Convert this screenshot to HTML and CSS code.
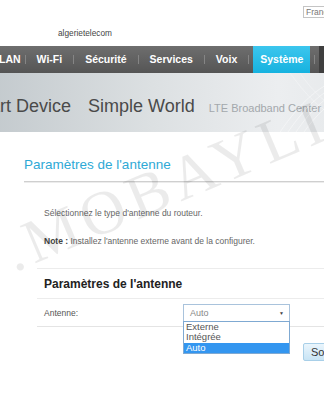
FILE: index.html
```html
<!DOCTYPE html>
<html lang="fr">
<head>
    <meta charset="UTF-8" />
    <meta name="viewport" content="width=device-width, initial-scale=1.0" />
    <title>Paramètres de l'antenne</title>
    <link rel="stylesheet" href="styles.css">
</head>

<body>
    <div class="page">
        <header class="top">
            <div class="lang-row">
                <div class="lang">Français</div>
            </div>
            <div class="brand">algerietelecom</div>
        </header>

        <nav class="menu">
            <span class="item first">LAN</span>
            <span class="sep first"></span>
            <span class="item">Wi-Fi</span>
            <span class="sep"></span>
            <span class="item">Sécurité</span>
            <span class="sep"></span>
            <span class="item">Services</span>
            <span class="sep"></span>
            <span class="item">Voix</span>
            <span class="sep"></span>
            <span class="item active">Système</span>
            <span class="sep"></span>
            <span class="item dark">Aide</span>
        </nav>

        <div class="banner">
            <span class="slogan">Smart Device</span>
            <span class="slogan">Simple World</span>
            <span class="sub">LTE Broadband Center</span>
            <svg class="waves" width="70" height="59" viewBox="0 0 70 59">
                <path d="M0 59 C20 30 40 10 70 2" stroke="#fff" stroke-width="0.6" fill="none" opacity="0.7" />
                <path d="M8 59 C25 34 45 14 70 8" stroke="#fff" stroke-width="0.6" fill="none" opacity="0.7" />
                <path d="M16 59 C30 38 48 20 70 14" stroke="#fff" stroke-width="0.6" fill="none" opacity="0.7" />
                <path d="M24 59 C36 42 52 26 70 20" stroke="#fff" stroke-width="0.6" fill="none" opacity="0.7" />
                <path d="M10 0 C25 20 40 40 70 50" stroke="#fff" stroke-width="0.6" fill="none" opacity="0.5" />
                <path d="M20 0 C32 18 48 34 70 42" stroke="#fff" stroke-width="0.6" fill="none" opacity="0.5" />
            </svg>
        </div>

        <div class="content">
            <h1 class="title">Paramètres de l'antenne</h1>

            <div class="intro">
                <p>Sélectionnez le type d'antenne du routeur.</p>
                <p><b>Note :</b> Installez l'antenne externe avant de la configurer.</p>
            </div>

            <div class="panel">
                <h2 class="panel-title">Paramètres de l'antenne</h2>
                <div class="row">
                    <span class="label">Antenne:</span>
                    <div class="select">
                        <span>Auto</span>
                        <span class="arrow">▼</span>
                        <ul class="options">
                            <li>Externe</li>
                            <li>Intégrée</li>
                            <li class="selected">Auto</li>
                        </ul>
                    </div>
                </div>
                <div class="actions">
                    <button class="btn">Soumettre</button>
                </div>
            </div>
        </div>

        <div class="watermark">WWW.MOBAYLIS.COM</div>
    </div>
</body>

</html>
```

FILE: styles.css
```css
* {
    margin: 0;
    padding: 0;
    box-sizing: border-box;
}

body {
    font-family: "Liberation Sans", Arial, sans-serif;
    background-color: white;
    overflow: hidden;
}

.page {
    position: relative;
    width: 324px;
    height: 400px;
    overflow: hidden;
}

/* haut de page */
.top {
    height: 46px;
    padding-top: 6px;
}

.lang-row {
    display: flex;
    padding-left: 303px;
}

.lang {
    flex-shrink: 0;
    width: 70px;
    height: 12px;
    border: 1px solid #c4c4c4;
    font-size: 8.5px;
    line-height: 10px;
    color: #777;
    padding-left: 2px;
}

.brand {
    margin-top: 10px;
    padding-left: 58px;
    font-size: 8.3px;
    line-height: 10px;
    color: #444;
}

/* menu */
.menu {
    display: flex;
    align-items: center;
    height: 27px;
    width: 420px;
    margin-left: -8px;
    background: linear-gradient(#6e6e6e, #555555);
    white-space: nowrap;
}

.item {
    padding: 0 7px;
    line-height: 27px;
    font-size: 10.5px;
    font-weight: bold;
    color: white;
}

.item.first {
    padding-right: 2px;
}

.item.active {
    background: linear-gradient(#3cc6ee, #16b2df);
}

.item.dark {
    background-color: #3f3f3f;
    padding-left: 10px;
}

.sep {
    width: 1px;
    height: 9px;
    margin: 0 4px;
    background-color: #858585;
}

.sep.first {
    margin-left: 2px;
}

/* bandeau */
.banner {
    position: relative;
    display: flex;
    align-items: baseline;
    height: 59px;
    padding-top: 23px;
    margin-left: -37px;
    width: 420px;
    background: linear-gradient(90deg, #bfc6ca, #dce0e2 45%, #eceef0 75%, #e3e6e8);
    white-space: nowrap;
}

.slogan {
    font-size: 18px;
    color: #4a4a4a;
    margin-right: 17px;
}

.slogan + .slogan {
    margin-right: 14px;
}

.sub {
    font-size: 11px;
    color: #a3a8ac;
}

.waves {
    position: absolute;
    left: 317px;
    top: 0;
}

/* contenu */
.content {
    padding-top: 25px;
}

.title {
    margin-left: 24px;
    padding-bottom: 8px;
    font-size: 13.5px;
    line-height: 16px;
    font-weight: normal;
    color: #2ea9d6;
    border-bottom: 1px solid #cfcfcf;
    box-shadow: 0 1px 0 #ececec;
}

.intro {
    padding: 25px 0 0 44px;
}

.intro p {
    font-size: 8.5px;
    line-height: 12px;
    color: #666;
    white-space: nowrap;
}

.intro p + p {
    margin-top: 16px;
}

.intro b {
    color: #444;
}

.panel {
    margin: 21px 0 0 37px;
    border-top: 1px solid #ececec;
}

.panel-title {
    padding: 8px 0 7px 7px;
    font-size: 12px;
    line-height: 14px;
    color: #222;
}

.row {
    display: flex;
    align-items: center;
    height: 29px;
    padding-left: 7px;
    border-top: 1px solid #ececec;
    border-bottom: 1px solid #e4e4e4;
}

.label {
    width: 139px;
    font-size: 8.5px;
    color: #555;
}

.select {
    position: relative;
    display: flex;
    justify-content: space-between;
    align-items: center;
    width: 107px;
    height: 18px;
    padding: 0 5px 0 6px;
    border: 1px solid #a9c3dc;
    font-size: 9px;
    color: #888;
}

.arrow {
    font-size: 5px;
    color: #444;
}

.options {
    position: absolute;
    left: -1px;
    top: 16px;
    width: 107px;
    list-style: none;
    background-color: white;
    border: 1px solid #7fa9d2;
    z-index: 2;
}

.options li {
    height: 10px;
    line-height: 10px;
    padding-left: 2px;
    font-size: 9.5px;
    color: #555;
}

.options li.selected {
    background-color: #3396f0;
    color: white;
    margin-top: 1px;
}

.actions {
    display: flex;
    padding: 16px 0 0 266px;
}

.btn {
    flex-shrink: 0;
    width: 62px;
    height: 18px;
    padding-left: 7px;
    text-align: left;
    border: 1px solid #a8cfe8;
    border-radius: 2px;
    background: linear-gradient(#eaf5fc, #c8e4f5);
    font-family: "Liberation Sans", Arial, sans-serif;
    font-size: 11px;
    color: #333;
}

/* filigrane */
.watermark {
    position: absolute;
    left: -179px;
    top: 298px;
    font-family: "Liberation Serif", "Times New Roman", serif;
    font-size: 62px;
    letter-spacing: 6px;
    line-height: 1;
    color: rgba(0, 0, 0, 0.08);
    white-space: nowrap;
    transform: rotate(-23deg);
    transform-origin: left top;
    pointer-events: none;
}
```
